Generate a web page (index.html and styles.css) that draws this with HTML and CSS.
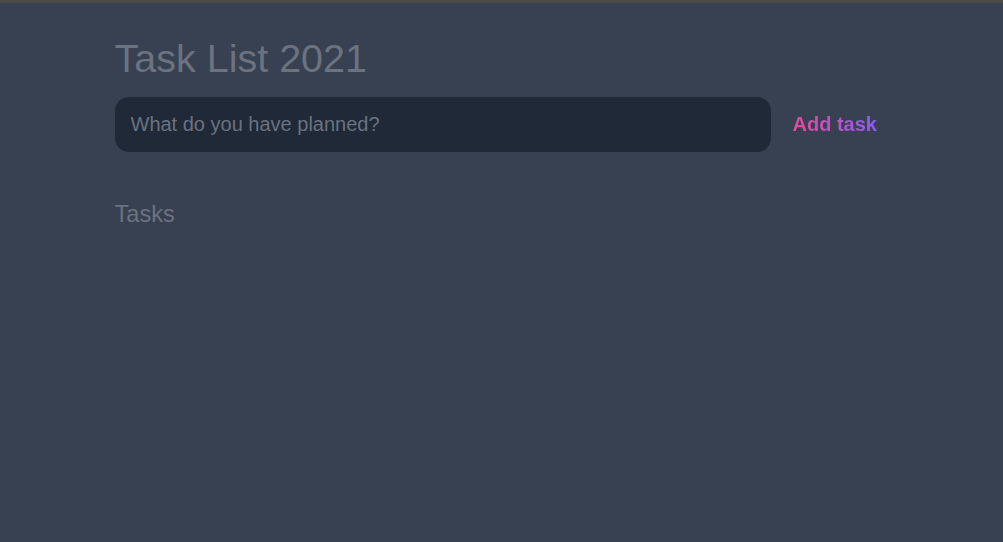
FILE: index.html
```html
<!DOCTYPE html>
<html lang="en">
<head>
<meta charset="utf-8">
<title>Task List 2021</title>
<link rel="stylesheet" href="styles.css">
</head>
<body>
<div class="topline"></div>
<main class="app">
  <h1 class="title">Task List 2021</h1>
  <form class="new-task">
    <input class="task-input" type="text" placeholder="What do you have planned?">
    <button class="add-btn" type="button"><span class="gradient">Add task</span></button>
  </form>
  <section class="tasks">
    <h2 class="tasks-heading">Tasks</h2>
  </section>
</main>
</body>
</html>
```
FILE: styles.css
```css
html, body {
  margin: 0;
  padding: 0;
  height: 100%;
}
body {
  background: #374151;
  font-family: "Liberation Sans", Arial, sans-serif;
  color: #6b7280;
}
.topline {
  height: 3px;
  background: #4a4a4a;
}
.app {
  width: 780px;
  margin: 0 auto;
  padding-left: 3px;
  box-sizing: border-box;
}
.title {
  margin: 0;
  padding-top: 33px;
  font-size: 39.5px;
  font-weight: 400;
  line-height: 44px;
  color: #6b7280;
}
.new-task {
  display: flex;
  align-items: center;
  margin-top: 17px;
}
.task-input {
  flex: 0 0 656px;
  height: 55px;
  box-sizing: border-box;
  border: none;
  outline: none;
  border-radius: 14px;
  background: #1f2937;
  padding: 0 16px;
  font-family: "Liberation Sans", Arial, sans-serif;
  font-size: 20px;
  color: #d1d5db;
}
.task-input::placeholder {
  color: #6b7280;
}
.add-btn {
  margin-left: 6px;
  padding: 0 16px;
  background: none;
  border: none;
  white-space: nowrap;
  font-family: "Liberation Sans", Arial, sans-serif;
  font-size: 20px;
  font-weight: 700;
  cursor: pointer;
}
.gradient {
  background: linear-gradient(90deg, #ec4899, #8b5cf6);
  -webkit-background-clip: text;
  background-clip: text;
  color: transparent;
}
.tasks {
  margin-top: 49px;
}
.tasks-heading {
  margin: 0;
  font-size: 23.6px;
  font-weight: 400;
  line-height: 26px;
  color: #6b7280;
}
```
